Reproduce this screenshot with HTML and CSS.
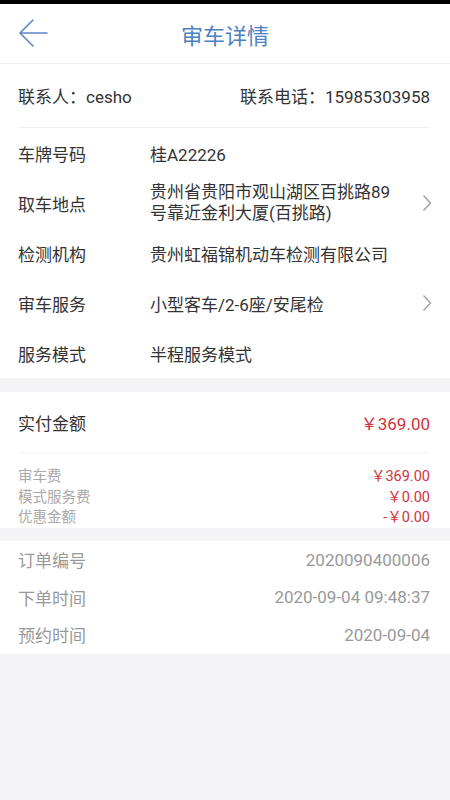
FILE: index.html
```html
<!DOCTYPE html>
<html lang="zh-CN">
<head>
<meta charset="utf-8">
<title>审车详情</title>
<link rel="stylesheet" href="styles.css">
</head>
<body>
<div class="status"></div>
<header class="topbar">
  <svg class="back" width="32" height="32" viewBox="0 0 32 32">
    <path d="M30 16 H3 M16 3 L3 16 L16 29" fill="none" stroke="#5b86c6" stroke-width="1.6" stroke-linecap="round" stroke-linejoin="round"/>
  </svg>
  <h1 class="title">审车详情</h1>
</header>

<section class="card">
  <div class="contact">
    <span>联系人：cesho</span>
    <span>联系电话：15985303958</span>
  </div>
  <div class="row"><span class="label">车牌号码</span><span class="value">桂A22226</span></div>
  <div class="row"><span class="label">取车地点</span><span class="value two">贵州省贵阳市观山湖区百挑路89号靠近金利大厦(百挑路)</span><svg class="chev" width="10" height="18" viewBox="0 0 10 18"><path d="M1.5 1.5 L8.5 9 L1.5 16.5" fill="none" stroke="#a0a0a0" stroke-width="1.4"/></svg></div>
  <div class="row"><span class="label">检测机构</span><span class="value">贵州虹福锦机动车检测有限公司</span></div>
  <div class="row"><span class="label">审车服务</span><span class="value">小型客车/2-6座/安尾检</span><svg class="chev" width="10" height="18" viewBox="0 0 10 18"><path d="M1.5 1.5 L8.5 9 L1.5 16.5" fill="none" stroke="#a0a0a0" stroke-width="1.4"/></svg></div>
  <div class="row"><span class="label">服务模式</span><span class="value">半程服务模式</span></div>
</section>

<section class="card pay">
  <div class="total"><span>实付金额</span><span class="red">￥369.00</span></div>
  <div class="fees">
    <div class="fee"><span>审车费</span><span class="red">￥369.00</span></div>
    <div class="fee"><span>模式服务费</span><span class="red">￥0.00</span></div>
    <div class="fee"><span>优惠金额</span><span class="red">-￥0.00</span></div>
  </div>
</section>

<section class="card order">
  <div class="orow"><span>订单编号</span><span>2020090400006</span></div>
  <div class="orow"><span>下单时间</span><span>2020-09-04 09:48:37</span></div>
  <div class="orow"><span>预约时间</span><span>2020-09-04</span></div>
</section>
</body>
</html>
```

FILE: styles.css
```css
html, body {
  margin: 0;
  padding: 0;
}
body {
  background: #f4f4f6;
  font-family: Roboto, "Noto Sans CJK SC", sans-serif;
  color: #333;
  width: 450px;
  min-height: 800px;
}
.status {
  height: 4px;
  background: #000;
}
.topbar {
  height: 59px;
  background: #fff;
  display: flex;
  align-items: center;
  justify-content: center;
  position: relative;
  border-bottom: 1px solid #efefef;
}
.back {
  position: absolute;
  left: 17px;
  top: 13px;
}
.title {
  margin: 0;
  font-weight: normal;
  font-size: 22px;
  color: #4c81c2;
  letter-spacing: 0;
}
.card {
  background: #fff;
}
.contact {
  height: 63px;
  margin: 0 20px 0 18px;
  border-bottom: 1px solid #efefef;
  display: flex;
  justify-content: space-between;
  align-items: center;
  font-size: 17px;
}
.row {
  height: 50px;
  display: flex;
  align-items: center;
  padding: 0 20px 0 18px;
  font-size: 17px;
}
.label {
  width: 132px;
  flex: none;
}
.value {
  flex: 1;
}
.value.two {
  line-height: 21px;
  padding-right: 22px;
}
.chev {
  flex: none;
  margin-right: -2px;
}
.card.pay {
  margin-top: 14px;
}
.total {
  height: 60px;
  margin: 0 20px 0 18px;
  border-bottom: 1px solid #f3f3f3;
  display: flex;
  justify-content: space-between;
  align-items: center;
  font-size: 17px;
}
.red {
  color: #d2323c;
}
.fees {
  padding: 14px 20px 0 18px;
  height: 61px;
  overflow: hidden;
  font-size: 14.5px;
  color: #aaa;
}
.fee {
  display: flex;
  justify-content: space-between;
  line-height: 20.5px;
}
.card.order {
  margin-top: 13px;
  color: #999;
  font-size: 17px;
}
.orow {
  height: 37.5px;
  display: flex;
  justify-content: space-between;
  align-items: center;
  padding: 0 20px 0 18px;
}
```
